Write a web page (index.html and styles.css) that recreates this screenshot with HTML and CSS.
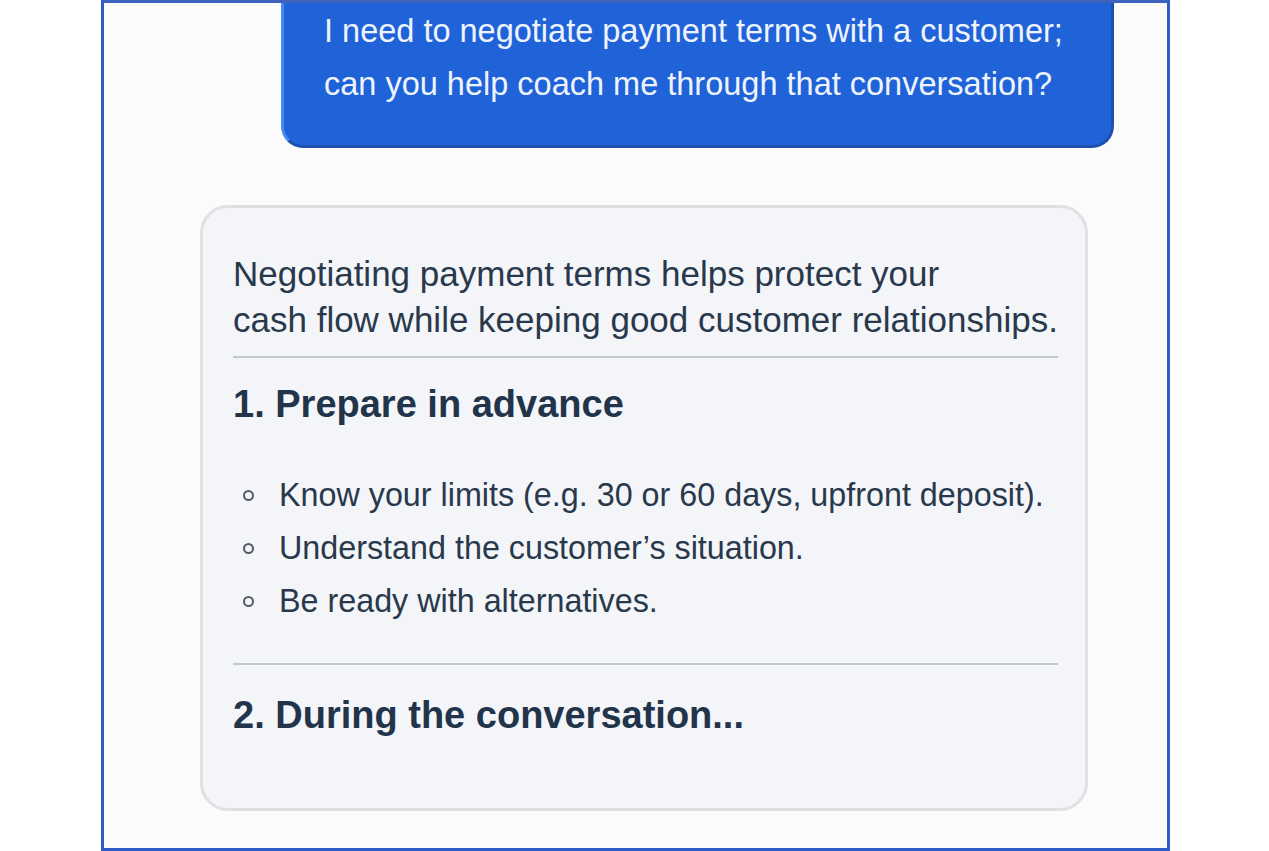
FILE: index.html
```html
<!DOCTYPE html>
<html lang="en">
<head>
    <meta charset="UTF-8">
    <meta name="viewport" content="width=device-width, initial-scale=1.0">
    <title>Payment terms chat</title>
    <link rel="stylesheet" href="styles.css">
</head>
<body>
    <div class="frame">
        <div class="user-row">
            <div class="bubble">
                I need to negotiate payment terms with a customer;<br>
                can you help coach me through that conversation?
            </div>
        </div>

        <div class="answer">
            <p class="intro">
                Negotiating payment terms helps protect your<br>
                cash flow while keeping good customer relationships.
            </p>
            <hr class="rule">
            <h2 class="step">1. Prepare in advance</h2>
            <ul class="tips">
                <li>Know your limits (e.g. 30 or 60 days, upfront deposit).</li>
                <li>Understand the customer’s situation.</li>
                <li>Be ready with alternatives.</li>
            </ul>
            <hr class="rule">
            <h2 class="step">2. During the conversation...</h2>
        </div>
    </div>
</body>
</html>
```

FILE: styles.css
```css
body {
    margin: 0;
    padding: 0;
    background-color: #ffffff;
    font-family: 'Liberation Sans', Arial, sans-serif;
}

.frame {
    box-sizing: border-box;
    width: 1069px;
    height: 851px;
    margin-left: 101px;
    border: 3px solid #2f5bc6;
    border-top-color: #3d63bd;
    background-color: #fbfbfb;
    overflow: hidden;
}

.user-row {
    display: flex;
    justify-content: flex-end;
    padding-right: 53px;
}

.bubble {
    width: 833px;
    box-sizing: border-box;
    margin-top: -30px;
    padding: 29px 10px 34px 40px;
    font-size: 32.5px;
    line-height: 53px;
    white-space: nowrap;
    color: #eef3fc;
    background-color: #2063d9;
    border: 3px solid #4a87ee;
    border-right-color: #1c4fae;
    border-bottom-color: #1c4fae;
    border-radius: 22px;
}

.answer {
    box-sizing: border-box;
    width: 888px;
    margin: 57px 0 0 96px;
    padding: 43px 27px 73px 30px;
    background-color: #f3f5f9;
    border: 3px solid #dfe0e3;
    border-radius: 28px;
    color: #29394b;
}

.intro {
    margin: 0;
    font-size: 35px;
    line-height: 46px;
    white-space: nowrap;
}

.rule {
    margin: 13px 0 0;
    border: none;
    height: 2px;
    background-color: #c3c6cc;
}

.step {
    margin: 26px 0 0;
    font-size: 38px;
    line-height: 40px;
    font-weight: bold;
    color: #22344a;
}

.tips {
    margin: 45px 0 0;
    padding-left: 10px;
    list-style: none;
    font-size: 32.3px;
    line-height: 53px;
}

.tips li::before {
    content: "";
    display: inline-block;
    box-sizing: border-box;
    width: 11px;
    height: 11px;
    margin-right: 25px;
    vertical-align: 5px;
    border: 2px solid #515c69;
    border-radius: 50%;
}

.tips + .rule {
    margin-top: 35px;
}

.tips + .rule + .step {
    margin-top: 30px;
}
```
